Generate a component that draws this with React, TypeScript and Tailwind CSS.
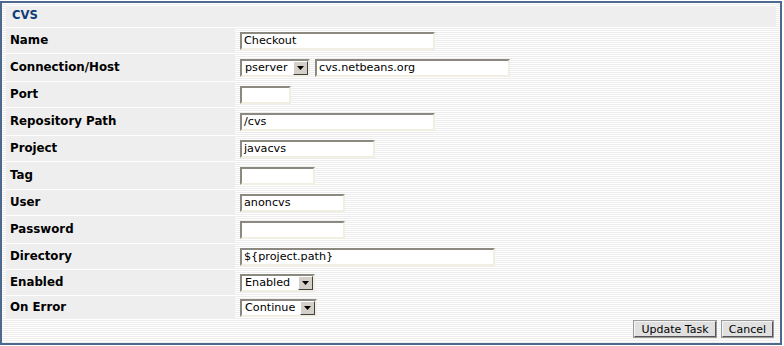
import React from 'react';

const font = { fontFamily: '"DejaVu Sans", Verdana, sans-serif' };

const inset =
	'border-2 border-t-[#8c8a80] border-l-[#8c8a80] border-b-[#f1efe2] border-r-[#f1efe2] bg-white';

const TextBox = ({ value = '', width }: { value?: string; width: string }) => (
	<div className={`${inset} ${width} h-[18px] flex items-center pl-[2px] text-[11.2px] text-black leading-none`}>
		{value}
	</div>
);

const Select = ({ value, width }: { value: string; width: string }) => (
	<div className={`${inset} ${width} h-[18px] flex items-center justify-between text-[11.2px] text-black leading-none`}>
		<span className="pl-[3px]">{value}</span>
		<span className="w-[15px] h-[14px] bg-[#d4d0c8] border border-t-white border-l-white border-b-[#404040] border-r-[#404040] flex items-center justify-center">
			<svg width="7" height="4" viewBox="0 0 7 4">
				<polygon points="0,0 7,0 3.5,4" fill="#000" />
			</svg>
		</span>
	</div>
);

const rows: { label: string; h: string; field: React.ReactNode }[] = [
	{ label: 'Name', h: 'h-[25px]', field: <TextBox value="Checkout" width="w-[195px]" /> },
	{
		label: 'Connection/Host',
		h: 'h-[25px]',
		field: (
			<div className="flex items-center gap-[5px]">
				<Select value="pserver" width="w-[70px]" />
				<TextBox value="cvs.netbeans.org" width="w-[195px]" />
			</div>
		),
	},
	{ label: 'Port', h: 'h-[25px]', field: <TextBox width="w-[51px]" /> },
	{ label: 'Repository Path', h: 'h-[25px]', field: <TextBox value="/cvs" width="w-[195px]" /> },
	{ label: 'Project', h: 'h-[25px]', field: <TextBox value="javacvs" width="w-[135px]" /> },
	{ label: 'Tag', h: 'h-[25px]', field: <TextBox width="w-[75px]" /> },
	{ label: 'User', h: 'h-[25px]', field: <TextBox value="anoncvs" width="w-[105px]" /> },
	{ label: 'Password', h: 'h-[25px]', field: <TextBox width="w-[105px]" /> },
	{ label: 'Directory', h: 'h-[25px]', field: <TextBox value="${project.path}" width="w-[255px]" /> },
	{ label: 'Enabled', h: 'h-[23px]', field: <Select value="Enabled" width="w-[75px]" /> },
	{ label: 'On Error', h: 'h-[23px]', field: <Select value="Continue" width="w-[77px]" /> },
];

const Button = ({ children, width }: { children: string; width: string }) => (
	<button
		className={`${width} h-[16px] bg-[#e0e0e0] border border-t-[#f4f4f4] border-l-[#f4f4f4] border-b-[#555] border-r-[#555] outline outline-1 outline-[#9a9a9a] text-[11px] leading-none text-black flex items-center justify-center`}
	>
		{children}
	</button>
);

export default function App() {
	return (
		<div className="w-[784px] h-[346px] bg-white pt-px" style={font}>
			<div className="w-[782px] h-[344px] border-2 border-[#4d6a8e] bg-[repeating-linear-gradient(to_bottom,#ffffff_0px,#ffffff_1px,#ededed_1px,#ededed_2px)] pt-[3px] pl-[4px] pr-[4px] flex flex-col">
				<div className="flex flex-col gap-[2px]">
					<div className="h-[20px] bg-[#eeeeee] flex items-center pl-[6px] text-[11.6px] font-bold text-[#0d3b78]">
						CVS
					</div>
					{rows.map((r) => (
						<div key={r.label} className={`flex gap-[2px] ${r.h}`}>
							<div className="w-[229px] bg-[#eeeeee] flex items-center pl-[4px] text-[11.8px] font-bold text-black">
								{r.label}
							</div>
							<div className="flex-1 flex items-center pl-[3px]">{r.field}</div>
						</div>
					))}
				</div>
				<div className="flex justify-end gap-[6px] pr-[3px] mt-[2px]">
					<Button width="w-[82px]">Update Task</Button>
					<Button width="w-[51px]">Cancel</Button>
				</div>
			</div>
		</div>
	);
}
